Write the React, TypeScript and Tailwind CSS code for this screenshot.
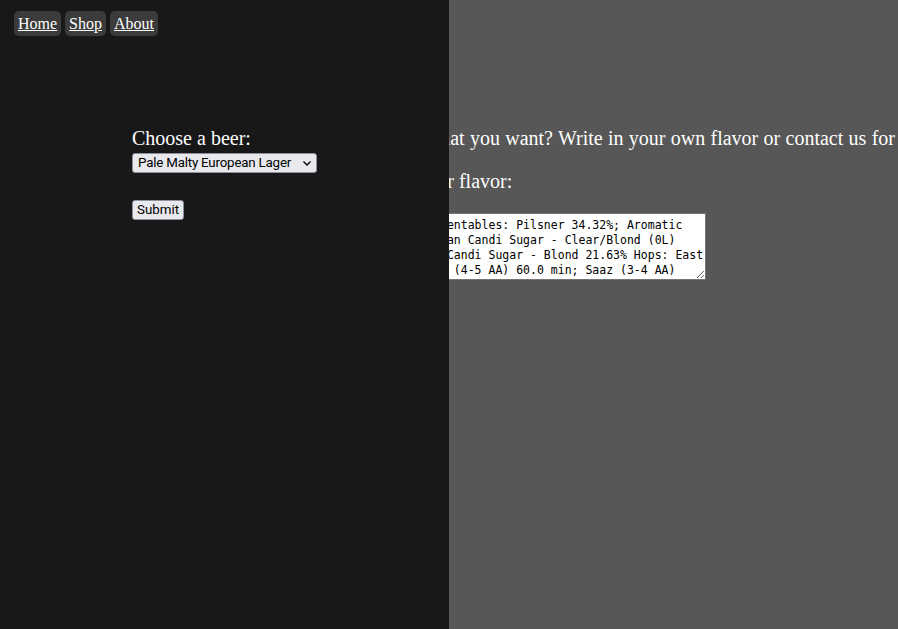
import React, { useState } from 'react';

const BEERS = ['Pale Malty European Lager', 'Hoppy American IPA', 'Belgian Tripel', 'Dry Irish Stout'];

const RECIPE = [
  'Malts and Fermentables: Pilsner 34.32%; Aromatic',
  'Oats 5%; Belgian Candi Sugar - Clear/Blond (0L)',
  '35.4% Belgian Candi Sugar - Blond 21.63% Hops: East',
  'Kent Goldings  (4-5 AA) 60.0 min; Saaz (3-4 AA)',
].join('\n');

const App: React.FC = () => {
  const [beer, setBeer] = useState(BEERS[0]);
  const [flavor, setFlavor] = useState(RECIPE);

  return (
    <div className="flex h-[629px] w-[898px] overflow-hidden font-['Liberation_Serif',serif] text-white">
      {/* left panel sits on top of the flavor column */}
      <div className="relative z-10 flex w-[449px] shrink-0 flex-col bg-[#181818]">
        <nav className="flex gap-[4px] pl-[14px] pt-[11px]">
          {['Home', 'Shop', 'About'].map((item) => (
            <a
              key={item}
              href="#"
              className="rounded-[5px] bg-[#3b3b3b] px-[4px] py-[3px] text-[16px] leading-[19px] text-white underline"
            >
              {item}
            </a>
          ))}
        </nav>

        <form className="flex flex-col items-start pl-[132px] pt-[91px]" onSubmit={(e) => e.preventDefault()}>
          <label className="text-[20px] leading-[23px]">Choose a beer:</label>
          <div className="relative mt-[3px]">
            <select
              value={beer}
              onChange={(e) => setBeer(e.target.value)}
              className="block h-[20px] w-[185px] appearance-none rounded-[3px] border border-[#8f8f9d] bg-[#e9e9ed] pl-[5px] font-['Roboto',sans-serif] text-[13.33px] leading-[18px] tracking-[-0.2px] text-black"
            >
              {BEERS.map((b) => (
                <option key={b} value={b}>
                  {b}
                </option>
              ))}
            </select>
            <svg
              className="pointer-events-none absolute right-[5px] top-[7px] h-[7px] w-[10px]"
              viewBox="0 0 10 7"
              fill="none"
              stroke="#000"
              strokeWidth="1.3"
            >
              <path d="M1.5 1.5l3.5 3.5L8.5 1.5" />
            </svg>
          </div>
          <button
            type="submit"
            className="mt-[27px] block h-[20px] w-[52px] rounded-[3px] border border-[#8f8f9d] bg-[#e9e9ed] font-['Roboto',sans-serif] text-[13.33px] leading-[18px] text-black"
          >
            Submit
          </button>
        </form>
      </div>

      <div className="flex-1 bg-[#575757]">
        <div className="-ml-[103px] flex flex-col items-start whitespace-nowrap pt-[127px]">
          <p className="text-[20px] leading-[23px] [word-spacing:0.3px]">
            Don&apos;t see what you want? Write in your own flavor or contact us for more options.
          </p>
          <p className="mt-[20px] ml-[1px] text-[20px] leading-[23px]">Write in your flavor:</p>
          <textarea
            value={flavor}
            onChange={(e) => setFlavor(e.target.value)}
            wrap="off"
            className="mt-[20px] ml-[1px] h-[67px] w-[359px] overflow-hidden whitespace-pre border border-[#767676] bg-white px-[2px] py-[4px] font-['DejaVu_Sans_Mono',monospace] text-[11.5px] leading-[15px] text-black"
          />
        </div>
      </div>
    </div>
  );
};

export default App;
